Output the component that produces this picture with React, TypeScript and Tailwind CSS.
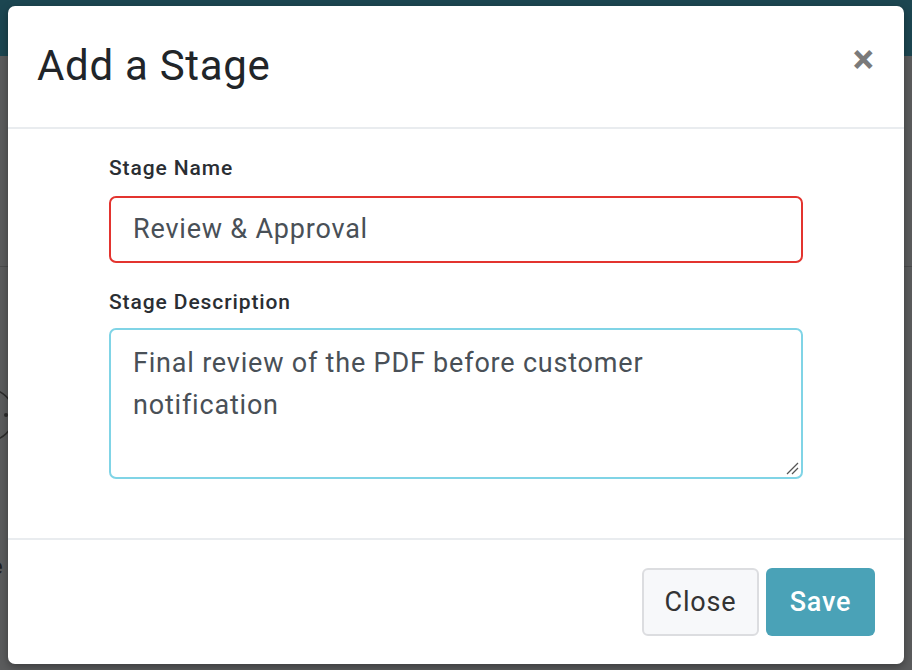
export default function App() {
  return (
    <div className="relative h-[670px] w-[912px] overflow-hidden bg-[#5b5c5d] font-['Roboto',sans-serif]">
      {/* dimmed page behind the dialog */}
      <div className="h-[56px] bg-[#1c4651]" />
      <div className="mt-[210px] h-px bg-[#4b4c4d]" />
      <svg className="absolute left-[-40px] top-[380px]" width="60" height="70" viewBox="0 0 60 70" fill="none">
        <circle cx="28" cy="35" r="26" stroke="#2c2c2c" strokeWidth="1.5" />
        <circle cx="46" cy="35" r="2" fill="#2c2c2c" />
      </svg>
      <span className="absolute left-[-9px] top-[550px] text-[22px] text-[#1e1e1e]">e</span>

      {/* dialog */}
      <div className="absolute left-[8px] top-[6px] flex h-[658px] w-[896px] flex-col rounded-[7px] bg-white shadow-[0_3px_8px_rgba(0,0,0,0.35)]">
        <div className="flex h-[123px] items-start justify-between border-b-2 border-[#e9ecef] pl-[29px] pr-[30px]">
          <h1 className="mt-[36px] text-[42px] leading-[48px] font-normal tracking-[0.7px] text-[#212529]">Add a Stage</h1>
          <button className="mt-[30px] text-[40px] leading-[48px] font-bold text-[#7a7a7a]">×</button>
        </div>

        <div className="flex flex-1 flex-col px-[101px] pt-[25px] tracking-[0.8px]">
          <label className="text-[21px] leading-[28px] font-medium tracking-[0.9px] text-[#2a2e33]">Stage Name</label>
          <div className="mt-[14px] flex h-[67px] items-center rounded-[7px] border-2 border-[#e3342f] px-[22px] text-[27px] text-[#495057]">
            Review &amp; Approval
          </div>
          <label className="mt-[25px] text-[21px] leading-[28px] font-medium tracking-[0.9px] text-[#2a2e33]">Stage Description</label>
          <div className="relative mt-[12px] h-[151px] rounded-[7px] border-2 border-[#80d4e6] px-[22px] pt-[12px] text-[27px] leading-[42px] text-[#495057]">
            Final review of the PDF before customer
            <br />
            notification
            <svg className="absolute bottom-[2px] right-[2px]" width="14" height="14" viewBox="0 0 14 14" stroke="#555" strokeWidth="1.3">
              <path d="M2 13 L13 2" />
              <path d="M7 13 L13 7" />
            </svg>
          </div>
        </div>

        <div className="flex h-[126px] items-center justify-end gap-[7px] border-t-2 border-[#e9ecef] pr-[29px] tracking-[0.8px]">
          <button className="h-[68px] w-[117px] rounded-[6px] border-2 border-[#dcdde0] bg-[#f7f8fa] text-[27px] text-[#333]">Close</button>
          <button className="h-[68px] w-[109px] rounded-[6px] bg-[#4aa2b7] text-[27px] font-medium text-white">Save</button>
        </div>
      </div>
    </div>
  );
}
